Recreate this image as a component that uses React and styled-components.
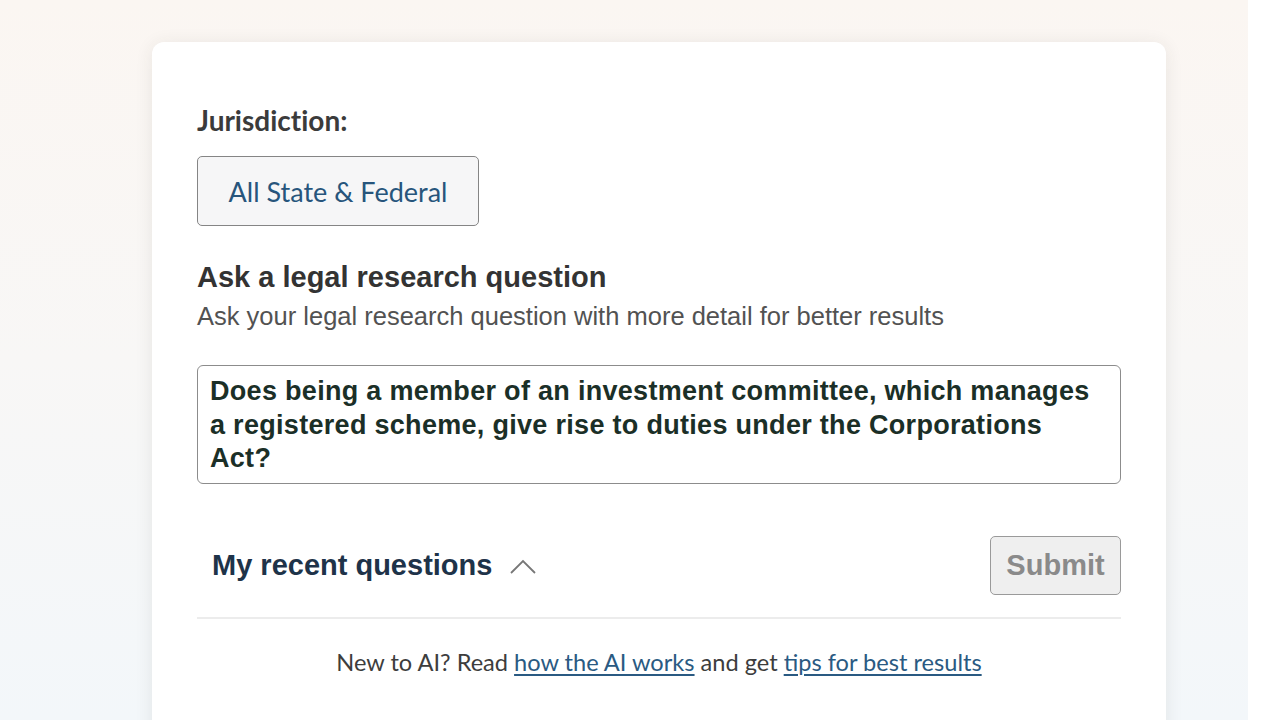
import React from 'react'
import styled, { createGlobalStyle } from 'styled-components'

const GlobalStyle = createGlobalStyle`
  html, body {
    margin: 0;
    padding: 0;
    height: 100%;
    overflow: hidden;
  }
  #root {
    height: 100%;
  }
`

const Page = styled.div`
  display: flex;
  height: 720px;
  background: #fff;
`

const Backdrop = styled.main`
  flex: 1;
  padding: 42px 82px 0 152px;
  background: linear-gradient(180deg, #fbf6f2 0%, #f8f7f6 50%, #f3f7fa 100%);
  overflow: hidden;
`

const Gutter = styled.div`
  width: 32px;
  background: #fff;
`

const Card = styled.section`
  background: #fff;
  border-radius: 12px;
  box-shadow: 0 2px 18px rgba(60, 50, 40, 0.09);
  padding: 61px 45px 40px;
  height: 760px;
  box-sizing: border-box;
`

const FieldLabel = styled.div`
  font-family: Lato, 'Open Sans', sans-serif;
  font-weight: 700;
  font-size: 28px;
  font-variant-ligatures: none;
  color: #3b3b3b;
  line-height: 34px;
  margin-bottom: 19px;
`

const ScopeButton = styled.button`
  display: block;
  width: 282px;
  height: 70px;
  box-sizing: border-box;
  background: #f6f6f7;
  border: 1.5px solid #858585;
  border-radius: 5px;
  font-family: Lato, 'Open Sans', sans-serif;
  font-size: 27px;
  color: #27557c;
  padding: 0;
  cursor: pointer;
`

const Heading = styled.h2`
  margin: 34px 0 0;
  font-family: 'Liberation Sans', Arial, sans-serif;
  font-weight: 700;
  font-size: 29px;
  line-height: 34px;
  color: #333;
`

const Hint = styled.p`
  margin: 7px 0 0;
  font-family: 'Liberation Sans', Arial, sans-serif;
  font-size: 25.5px;
  line-height: 30px;
  color: #525252;
`

const Question = styled.div`
  margin-top: 34px;
  height: 119px;
  box-sizing: border-box;
  border: 1.5px solid #8c8c8c;
  border-radius: 6px;
  padding: 9px 22px 8px 12px;
  font-family: 'Liberation Sans', Arial, sans-serif;
  font-weight: 700;
  font-size: 27px;
  line-height: 33.5px;
  letter-spacing: 0.3px;
  color: #1b2f27;
`

const ActionRow = styled.div`
  display: flex;
  align-items: center;
  justify-content: space-between;
  margin-top: 52px;
  padding-bottom: 22px;
  border-bottom: 2px solid #ececec;
`

const Toggle = styled.button`
  display: flex;
  align-items: center;
  gap: 18px;
  background: none;
  border: 0;
  padding: 0 0 0 15px;
  font-family: 'Liberation Sans', Arial, sans-serif;
  font-weight: 700;
  font-size: 29px;
  color: #1e3349;
  cursor: pointer;
`

const SubmitButton = styled.button`
  width: 131px;
  height: 59px;
  box-sizing: border-box;
  background: #efefef;
  border: 1.5px solid #9a9a9a;
  border-radius: 5px;
  font-family: 'Liberation Sans', Arial, sans-serif;
  font-weight: 700;
  font-size: 29px;
  color: #8a8a8a;
  padding: 0;
`

const Footer = styled.p`
  margin: 29px 0 0;
  text-align: center;
  font-family: Lato, 'Open Sans', sans-serif;
  font-size: 23.6px;
  line-height: 29px;
  color: #3d3d3d;
`

const HelpLink = styled.a`
  color: #2a5a82;
  text-decoration: underline;
  text-underline-offset: 3px;
`

const Chevron = () => (
  <svg width="26" height="16" viewBox="0 0 26 16" fill="none">
    <path d="M1 15 L13 3 L25 15" stroke="#777" strokeWidth="1.8" />
  </svg>
)

export default function App () {
  return (
    <Page>
      <GlobalStyle />
      <Backdrop>
        <Card>
          <FieldLabel>Jurisdiction:</FieldLabel>
          <ScopeButton>All State &amp; Federal</ScopeButton>
          <Heading>Ask a legal research question</Heading>
          <Hint>Ask your legal research question with more detail for better results</Hint>
          <Question>
            Does being a member of an investment committee, which manages a registered scheme, give rise to duties under the Corporations Act?
          </Question>
          <ActionRow>
            <Toggle>
              My recent questions
              <Chevron />
            </Toggle>
            <SubmitButton disabled>Submit</SubmitButton>
          </ActionRow>
          <Footer>
            New to AI? Read <HelpLink href="#">how the AI works</HelpLink> and get <HelpLink href="#">tips for best results</HelpLink>
          </Footer>
        </Card>
      </Backdrop>
      <Gutter />
    </Page>
  )
}
